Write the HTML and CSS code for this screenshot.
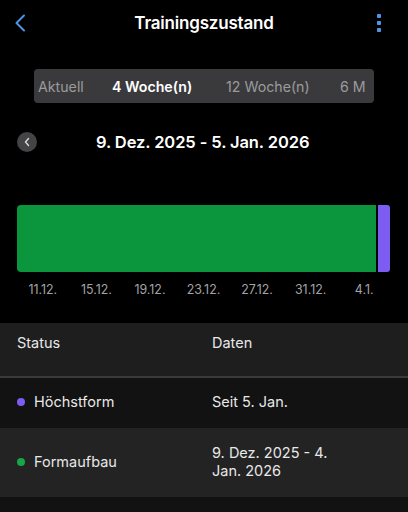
FILE: index.html
```html
<!DOCTYPE html>
<html lang="de">
<head>
    <meta charset="UTF-8">
    <meta name="viewport" content="width=device-width, initial-scale=1.0">
    <title>Trainingszustand</title>
    <link rel="stylesheet" href="styles.css">
</head>
<body>
    <div class="header">
        <svg class="back" width="12" height="18" viewBox="0 0 12 18">
            <path d="M10 1.5 L2.5 9 L10 16.5" fill="none" stroke="#4f93e3" stroke-width="2" stroke-linecap="round" stroke-linejoin="round"/>
        </svg>
        <div class="title">Trainingszustand</div>
        <svg class="more" width="6" height="20" viewBox="0 0 6 20">
            <rect x="1" y="1" width="4" height="4" rx="0.8" fill="#4f93e3"/>
            <rect x="1" y="8" width="4" height="4" rx="0.8" fill="#4f93e3"/>
            <rect x="1" y="15" width="4" height="4" rx="0.8" fill="#4f93e3"/>
        </svg>
    </div>

    <div class="segments">
        <span class="seg">Aktuell</span>
        <span class="seg active">4 Woche(n)</span>
        <span class="seg">12 Woche(n)</span>
        <span class="seg last">6 M</span>
    </div>

    <div class="range">
        <div class="prev">
            <svg width="8" height="10" viewBox="0 0 8 10">
                <path d="M5.5 1.5 L2.5 5 L5.5 8.5" fill="none" stroke="#d8d8d8" stroke-width="1.4" stroke-linecap="round" stroke-linejoin="round"/>
            </svg>
        </div>
        <div class="range-text">9. Dez. 2025 - 5. Jan. 2026</div>
    </div>

    <div class="chart">
        <div class="bar green"></div>
        <div class="bar purple"></div>
    </div>
    <div class="axis">
        <span>11.12.</span>
        <span>15.12.</span>
        <span>19.12.</span>
        <span>23.12.</span>
        <span>27.12.</span>
        <span>31.12.</span>
        <span>4.1.</span>
    </div>

    <div class="table">
        <div class="row head">
            <div class="cell">Status</div>
            <div class="cell">Daten</div>
        </div>
        <div class="row dark">
            <div class="cell"><span class="dot dot-purple"></span>Höchstform</div>
            <div class="cell">Seit 5. Jan.</div>
        </div>
        <div class="row light tall">
            <div class="cell"><span class="dot dot-green"></span>Formaufbau</div>
            <div class="cell">9. Dez. 2025 - 4.<br>Jan. 2026</div>
        </div>
    </div>
</body>
</html>
```

FILE: styles.css
```css
body {
    margin: 0;
    background-color: #000;
    color: #fff;
    font-family: Inter, "Noto Sans", sans-serif;
    height: 512px;
    overflow: hidden;
}
.header {
    height: 46px;
    display: flex;
    align-items: center;
    justify-content: space-between;
    padding: 0 26px 0 14px;
}
.title {
    font-size: 17px;
    font-weight: 600;
    letter-spacing: -0.2px;
    margin-left: 6px;
}
.segments {
    margin: 23px 34px 0 34px;
    height: 34px;
    background-color: #3a3a3c;
    border-radius: 4px;
    display: flex;
    align-items: center;
    padding-left: 4px;
    overflow: hidden;
    white-space: nowrap;
}
.seg {
    font-size: 14.2px;
    color: #9a9a9e;
    width: 114px;
    flex-shrink: 0;
}
.seg:first-child {
    width: 74px;
}
.seg.active {
    color: #fff;
    font-weight: 600;
}
.seg.last {
    width: auto;
}
.range {
    display: flex;
    align-items: center;
    margin-top: 28px;
    padding-left: 17px;
    height: 22px;
}
.prev {
    width: 20px;
    height: 20px;
    border-radius: 50%;
    background-color: #444446;
    display: flex;
    align-items: center;
    justify-content: center;
}
.range-text {
    font-size: 16.5px;
    font-weight: 600;
    letter-spacing: -0.1px;
    margin-left: 59px;
}
.chart {
    display: flex;
    margin: 52px 0 0 17px;
    height: 67px;
    gap: 2px;
}
.bar.green {
    width: 359px;
    background-color: #0b963d;
    border-radius: 4px 0 0 4px;
}
.bar.purple {
    width: 12px;
    background-color: #7d5cf2;
    border-radius: 0 3px 3px 0;
}
.axis {
    display: grid;
    grid-template-columns: repeat(7, 1fr);
    width: 375px;
    margin: 10px 0 0 16px;
    font-size: 12.4px;
    color: #a3a3a6;
    text-align: center;
    height: 16px;
    line-height: 16px;
}
.table {
    margin-top: 25px;
    background-color: #121212;
    height: 190px;
}
.row {
    display: grid;
    grid-template-columns: 195px 1fr;
    padding-left: 17px;
    align-items: center;
    font-size: 14.5px;
    color: #e8e8e8;
    box-sizing: border-box;
}
.row.head {
    background-color: #1e1e1f;
    border-bottom: 2px solid #3a3a3b;
    align-items: start;
    padding-top: 11px;
    height: 55px;
}
.row.dark {
    height: 50px;
    padding-bottom: 3px;
    background-color: #121212;
}
.row.light {
    background-color: #232323;
}
.row.tall {
    height: 69px;
    padding-bottom: 2px;
    line-height: 18px;
}
.cell {
    display: flex;
    align-items: center;
}
.dot {
    width: 8px;
    height: 8px;
    border-radius: 50%;
    margin-right: 9px;
}
.dot-purple {
    background-color: #7d5cf2;
}
.dot-green {
    background-color: #17a548;
}
```
